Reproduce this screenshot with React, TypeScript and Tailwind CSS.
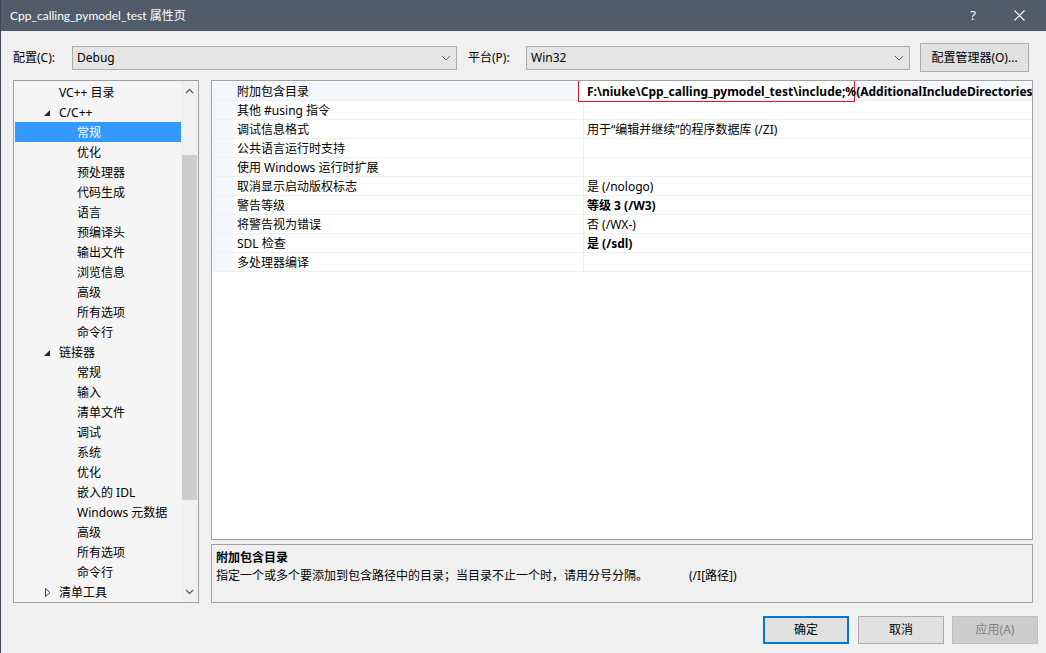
import React from 'react';

const FONT = '"Noto Sans", "Noto Sans CJK SC", sans-serif';
const TITLE_FONT = 'Lato, "Noto Sans CJK SC", sans-serif';

type TreeItem = { label: string; level: 0 | 1; state?: 'open' | 'closed'; selected?: boolean };

const tree: TreeItem[] = [
  { label: 'VC++ 目录', level: 0 },
  { label: 'C/C++', level: 0, state: 'open' },
  { label: '常规', level: 1, selected: true },
  { label: '优化', level: 1 },
  { label: '预处理器', level: 1 },
  { label: '代码生成', level: 1 },
  { label: '语言', level: 1 },
  { label: '预编译头', level: 1 },
  { label: '输出文件', level: 1 },
  { label: '浏览信息', level: 1 },
  { label: '高级', level: 1 },
  { label: '所有选项', level: 1 },
  { label: '命令行', level: 1 },
  { label: '链接器', level: 0, state: 'open' },
  { label: '常规', level: 1 },
  { label: '输入', level: 1 },
  { label: '清单文件', level: 1 },
  { label: '调试', level: 1 },
  { label: '系统', level: 1 },
  { label: '优化', level: 1 },
  { label: '嵌入的 IDL', level: 1 },
  { label: 'Windows 元数据', level: 1 },
  { label: '高级', level: 1 },
  { label: '所有选项', level: 1 },
  { label: '命令行', level: 1 },
  { label: '清单工具', level: 0, state: 'closed' },
];

type Prop = { name: string; value?: string; bold?: boolean };

const props: Prop[] = [
  { name: '附加包含目录', value: 'F:\\niuke\\Cpp_calling_pymodel_test\\include;%(AdditionalIncludeDirectories)', bold: true },
  { name: '其他 #using 指令' },
  { name: '调试信息格式', value: '用于“编辑并继续”的程序数据库 (/ZI)' },
  { name: '公共语言运行时支持' },
  { name: '使用 Windows 运行时扩展' },
  { name: '取消显示启动版权标志', value: '是 (/nologo)' },
  { name: '警告等级', value: '等级 3 (/W3)', bold: true },
  { name: '将警告视为错误', value: '否 (/WX-)' },
  { name: 'SDL 检查', value: '是 (/sdl)', bold: true },
  { name: '多处理器编译' },
];

function Chevron() {
  return (
    <svg width="10" height="6" viewBox="0 0 10 6" className="text-[#606060]">
      <path d="M1 1l4 4 4-4" fill="none" stroke="currentColor" strokeWidth="1" />
    </svg>
  );
}

function Combo({ value, className }: { value: string; className: string }) {
  return (
    <div className={`flex h-[24px] items-center justify-between border border-[#adadad] bg-[#e5e5e5] pl-[4px] pr-[5px] ${className}`}>
      <span className="text-[12px] text-black">{value}</span>
      <Chevron />
    </div>
  );
}

function TreeRow({ item }: { item: TreeItem }) {
  return (
    <div
      className={`relative h-[20px] text-[12px] leading-[20px] ${
        item.selected ? 'bg-[#3399ff] text-white' : 'text-black'
      } ${item.level === 0 ? 'pl-[44px]' : 'pl-[62px]'}`}
    >
      {item.state === 'open' && (
        <svg width="6" height="6" viewBox="0 0 6 6" className="absolute left-[29px] top-[8px]">
          <path d="M6 0L6 6L0 6Z" fill="#262626" />
        </svg>
      )}
      {item.state === 'closed' && (
        <svg width="6" height="9" viewBox="0 0 6 9" className="absolute left-[30px] top-[6px]">
          <path d="M0.5 0.5L5 4.5L0.5 8.5Z" fill="none" stroke="#404040" strokeWidth="1" />
        </svg>
      )}
      <span className="relative top-[1px]">{item.label}</span>
    </div>
  );
}

export default function App() {
  return (
    <div
      className="flex h-[653px] w-[1046px] flex-col overflow-hidden border-l border-[#3c4654] bg-[#f0f0f0]"
      style={{ fontFamily: FONT }}
    >
      {/* ── Title bar ── */}
      <div className="flex h-[31px] shrink-0 items-center justify-between bg-[#515c6b] pl-[9px] pr-[4px] text-white">
        <span className="text-[12px]" style={{ fontFamily: TITLE_FONT }}>
          Cpp_calling_pymodel_test 属性页
        </span>
        <div className="flex h-full items-center">
          <span className="w-[46px] text-center text-[13px]">?</span>
          <div className="flex w-[46px] justify-center">
            <svg width="11" height="11" viewBox="0 0 11 11">
              <path d="M0.5 0.5l10 10M10.5 0.5l-10 10" stroke="white" strokeWidth="1.1" />
            </svg>
          </div>
        </div>
      </div>

      {/* ── Configuration row ── */}
      <div className="mt-[12px] flex h-[29px] items-center pl-[12px] text-[12px] text-black">
        <span className="w-[59px]">配置(C):</span>
        <Combo value="Debug" className="w-[385px]" />
        <span className="ml-[11px] w-[58px]">平台(P):</span>
        <Combo value="Win32" className="w-[384px]" />
        <button className="ml-[10px] h-[29px] w-[109px] border border-[#adadad] bg-[#e1e1e1] text-[12px]">
          配置管理器(O)...
        </button>
      </div>

      {/* ── Main ── */}
      <div className="mt-[8px] flex h-[523px] gap-[12px] pl-[12px]">
        {/* Tree */}
        <div className="flex w-[186px] border border-[#a0a0a0] bg-[#f5f5f5]">
          <div className="flex-1 pl-[1px] pt-[1px]">
            {tree.map((t, i) => (
              <TreeRow key={i} item={t} />
            ))}
          </div>
          <div className="flex w-[17px] flex-col items-center bg-[#f0f0f0]">
            <div className="flex h-[20px] items-center">
              <svg width="9" height="6" viewBox="0 0 9 6">
                <path d="M1 5l3.5-3.5L8 5" fill="none" stroke="#606060" strokeWidth="1.3" />
              </svg>
            </div>
            <div className="mt-[54px] h-[345px] w-[15px] bg-[#cdcdcd]" />
            <div className="flex-1" />
            <div className="flex h-[20px] items-center">
              <svg width="9" height="6" viewBox="0 0 9 6">
                <path d="M1 1l3.5 3.5L8 1" fill="none" stroke="#606060" strokeWidth="1.3" />
              </svg>
            </div>
          </div>
        </div>

        {/* Right column */}
        <div className="flex w-[822px] flex-col gap-[4px]">
          {/* Property grid */}
          <div className="h-[460px] overflow-hidden border border-[#a0a0a0] bg-white pt-[1px]">
            {props.map((p, i) => (
              <div key={i} className="flex h-[19px] border-b border-[#f0f0f0] text-[12px] leading-[18px] text-black">
                <div className="w-[21px] shrink-0 bg-[#f4f7fb]" />
                <div className={`w-[351px] shrink-0 border-r border-[#f0f0f0] pl-[4px] ${i === 0 ? 'bg-[#f4f7fb]' : ''}`}>
                  <span className="relative top-[1px]">{p.name}</span>
                </div>
                <div className={`relative min-w-0 flex-1 pl-[3px] ${i === 0 ? 'bg-[#f4f7fb]' : ''}`}>
                  {i === 0 && (
                    <div className="absolute left-[-6px] top-[-2px] h-[22px] w-[277px] border border-[#e81123] bg-white" />
                  )}
                  <div className="relative top-[1px] overflow-hidden whitespace-nowrap">
                    <span className={p.bold ? 'font-bold' : ''}>{p.value}</span>
                  </div>
                </div>
              </div>
            ))}
          </div>

          {/* Description */}
          <div className="h-[59px] border border-[#a0a0a0] bg-[#f0f0f0] px-[4px] pt-[4px] text-[12px] leading-[18px] text-black">
            <div className="font-bold">附加包含目录</div>
            <div className="flex">
              <span className="w-[473px]">指定一个或多个要添加到包含路径中的目录；当目录不止一个时，请用分号分隔。</span>
              <span>(/I[路径])</span>
            </div>
          </div>
        </div>
      </div>

      {/* ── Buttons ── */}
      <div className="mt-[13px] flex justify-end gap-[8px] pr-[8px] text-[12px]">
        <button className="mr-[1px] h-[28px] w-[86px] border-2 border-[#0078d7] bg-[#e1e1e1] text-black">确定</button>
        <button className="h-[28px] w-[86px] border border-[#adadad] bg-[#e1e1e1] text-black">取消</button>
        <button className="h-[28px] w-[86px] border border-[#bfbfbf] bg-[#cccccc] text-[#838383]">应用(A)</button>
      </div>
    </div>
  );
}
